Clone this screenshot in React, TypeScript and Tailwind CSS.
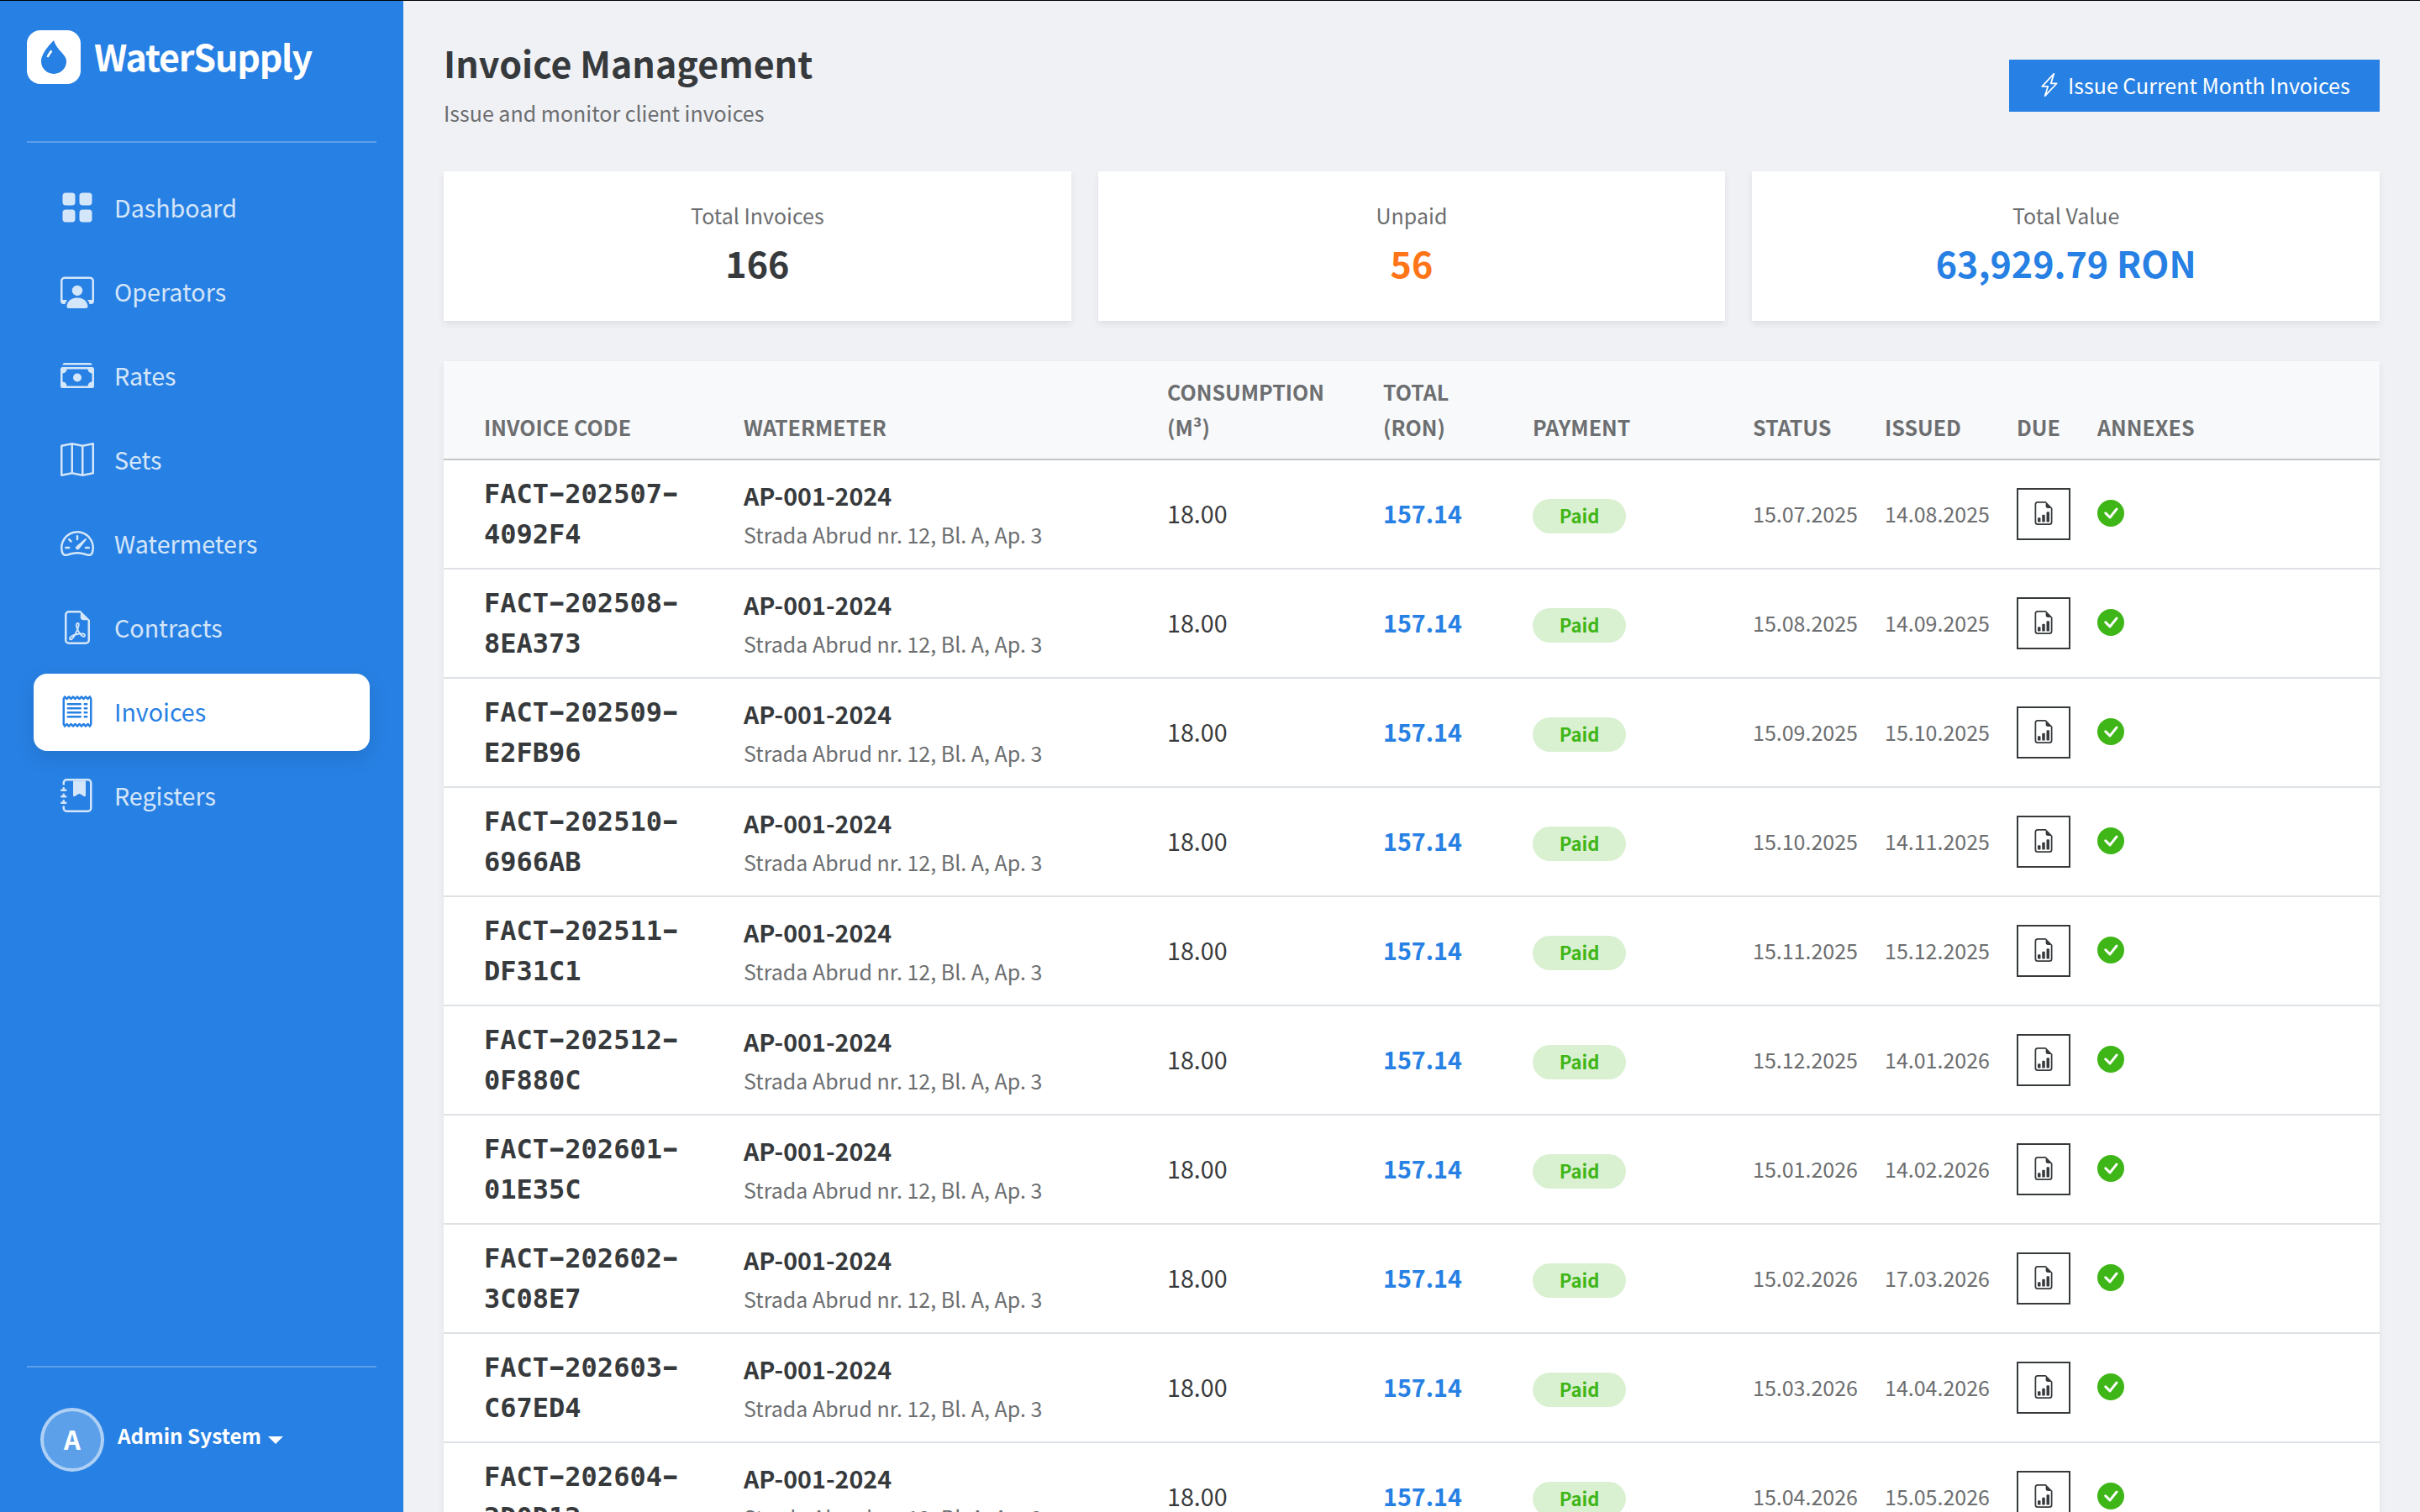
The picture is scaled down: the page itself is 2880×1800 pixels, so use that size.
import { clsx } from 'clsx'
import type { IconType } from 'react-icons'
import {
  BsCashStack,
  BsCheckCircleFill,
  BsDropletFill,
  BsFileEarmarkBarGraph,
  BsFileEarmarkPdf,
  BsGridFill,
  BsJournalBookmarkFill,
  BsLightningCharge,
  BsMap,
  BsPersonWorkspace,
  BsReceipt,
  BsSpeedometer2,
} from 'react-icons/bs'

interface Invoice {
  period: string
  suffix: string
  issued: string
  due: string
}

const NAV: { label: string; icon: IconType; active?: boolean }[] = [
  { label: 'Dashboard', icon: BsGridFill },
  { label: 'Operators', icon: BsPersonWorkspace },
  { label: 'Rates', icon: BsCashStack },
  { label: 'Sets', icon: BsMap },
  { label: 'Watermeters', icon: BsSpeedometer2 },
  { label: 'Contracts', icon: BsFileEarmarkPdf },
  { label: 'Invoices', icon: BsReceipt, active: true },
  { label: 'Registers', icon: BsJournalBookmarkFill },
]

const STATS = [
  { label: 'Total Invoices', value: '166', color: 'text-[#373a3c]' },
  { label: 'Unpaid', value: '56', color: 'text-[#ff7518]' },
  { label: 'Total Value', value: '63,929.79 RON', color: 'text-[#2780e3]' },
]

const INVOICES: Invoice[] = [
  { period: '202507', suffix: '4092F4', issued: '15.07.2025', due: '14.08.2025' },
  { period: '202508', suffix: '8EA373', issued: '15.08.2025', due: '14.09.2025' },
  { period: '202509', suffix: 'E2FB96', issued: '15.09.2025', due: '15.10.2025' },
  { period: '202510', suffix: '6966AB', issued: '15.10.2025', due: '14.11.2025' },
  { period: '202511', suffix: 'DF31C1', issued: '15.11.2025', due: '15.12.2025' },
  { period: '202512', suffix: '0F880C', issued: '15.12.2025', due: '14.01.2026' },
  { period: '202601', suffix: '01E35C', issued: '15.01.2026', due: '14.02.2026' },
  { period: '202602', suffix: '3C08E7', issued: '15.02.2026', due: '17.03.2026' },
  { period: '202603', suffix: 'C67ED4', issued: '15.03.2026', due: '14.04.2026' },
  { period: '202604', suffix: '2D0D12', issued: '15.04.2026', due: '15.05.2026' },
]

function Sidebar() {
  return (
    <aside className="flex w-[480px] shrink-0 flex-col bg-[#2780e3] px-8 text-white">
      <div className="flex h-[169px] items-start gap-4 border-b-2 border-white/25 pt-[35px]">
        <div className="flex size-16 items-center justify-center rounded-2xl bg-white">
          <BsDropletFill className="size-10 text-[#2780e3]" />
        </div>
        <span className="text-[43px] font-bold leading-[60px] tracking-[-1.2px]">WaterSupply</span>
      </div>

      <nav className="mt-8 flex flex-1 flex-col gap-2 px-2">
        {NAV.map(({ label, icon: Icon, active }) => (
          <a
            key={label}
            className={clsx(
              'flex h-[92px] items-center gap-6 rounded-2xl px-8',
              active
                ? 'bg-white text-[#2780e3] shadow-[0_8px_24px_rgba(0,0,0,0.1)]'
                : 'text-white/80',
            )}
          >
            <Icon className="mb-0.5 size-10" />
            <span className="pb-0.5 text-[28.65px] leading-[44px]">{label}</span>
          </a>
        ))}
      </nav>

      <div className="flex h-[174px] items-center border-t-2 border-white/25 px-4">
        <div className="flex size-[76px] items-center justify-center rounded-full border-4 border-white/50 bg-white/25">
          <span className="pb-0.5 text-[31px] font-bold leading-[40px]">A</span>
        </div>
        <span className="ml-4 pb-2.5 text-[24.3px] font-bold leading-[36px]">Admin System</span>
        <svg className="ml-2 h-[9px] w-[18px]" viewBox="0 0 18 9" fill="currentColor">
          <path d="M0 0h18L9 9z" />
        </svg>
      </div>
    </aside>
  )
}

// the mono hyphen is short, stretch it to nearly fill its cell
function Dash() {
  return <span className="inline-block origin-center -translate-y-px scale-x-[1.55]">-</span>
}

function InvoiceRow({ invoice }: { invoice: Invoice }) {
  return (
    <tr className="h-[130px] *:border-b-2 *:border-[#dee2e6]">
      <td className="pl-12 font-['DejaVu_Sans_Mono',monospace] text-[32px] font-bold leading-[48px]">
        FACT<Dash />{invoice.period}<Dash /><br />
        {invoice.suffix}
      </td>
      <td className="px-4 pb-0.5">
        <div className="text-[28.65px] font-bold leading-[50px]">AP-001-2024</div>
        <div className="text-[25px] leading-[42px] text-[#6c6e70]">Strada Abrud nr. 12, Bl. A, Ap. 3</div>
      </td>
      <td className="px-4 pb-0.5 text-[28.65px] leading-[48px]">18.00</td>
      <td className="px-4 pb-0.5 text-[28.65px] font-bold leading-[48px] text-[#2780e3]">157.14</td>
      <td className="px-4 pt-[5px]">
        <div className="flex h-[41px] w-[111px] items-center justify-center rounded-full bg-[#d9f0d1] pb-0.5 text-[22px] font-bold text-[#3fb618]">
          Paid
        </div>
      </td>
      <td className="px-4 pb-0.5 text-[25px] leading-[42px] text-[#6c6e70]">{invoice.issued}</td>
      <td className="px-4 pb-0.5 text-[25px] leading-[42px] text-[#6c6e70]">{invoice.due}</td>
      <td className="px-4">
        <button className="flex h-[62px] w-16 items-center justify-center border-2 border-[#373a3c] pb-0.5">
          <BsFileEarmarkBarGraph className="size-7" />
        </button>
      </td>
      <td className="px-4 pb-0.5">
        <BsCheckCircleFill className="size-8 text-[#3fb618]" />
      </td>
    </tr>
  )
}

function InvoiceTable() {
  return (
    <section className="mt-12 bg-white shadow-[0_4px_8px_rgba(0,0,0,0.075)]">
      <table className="w-full table-fixed border-separate border-spacing-0 text-left">
        <colgroup>
          <col className="w-[341px]" />
          <col className="w-[504px]" />
          <col className="w-[257px]" />
          <col className="w-[178px]" />
          <col className="w-[262px]" />
          <col className="w-[157px]" />
          <col className="w-[157px]" />
          <col className="w-[96px]" />
          <col />
        </colgroup>
        <thead>
          <tr className="h-[118px] bg-[#f8f9fb] align-bottom text-[25px] font-bold uppercase leading-[42px] text-[#6c6e70] *:border-b-2 *:border-[#c3c6c8] *:pb-[17px]">
            <th className="pl-12">Invoice Code</th>
            <th className="px-4">Watermeter</th>
            <th className="px-4">Consumption<br />(m³)</th>
            <th className="px-4">Total<br />(RON)</th>
            <th className="px-4">Payment</th>
            <th className="px-4">Status</th>
            <th className="px-4">Issued</th>
            <th className="px-4">Due</th>
            <th className="px-4">Annexes</th>
          </tr>
        </thead>
        <tbody>
          {INVOICES.map(inv => <InvoiceRow key={inv.period} invoice={inv} />)}
        </tbody>
      </table>
    </section>
  )
}

export default function App() {
  return (
    <div className="flex h-[1800px] w-[2880px] overflow-hidden border-t border-black bg-[#f0f1f5] font-['Noto_Sans_CJK_JP',sans-serif] text-[#373a3c]">
      <Sidebar />
      <main className="min-w-0 flex-1 px-12 pt-11">
        <header className="flex h-[115px] items-start justify-between">
          <div>
            <h1 className="text-[43px] font-bold leading-[58px]">Invoice Management</h1>
            <p className="mt-2.5 text-[25px] leading-[42px] text-[#6c6e70]">Issue and monitor client invoices</p>
          </div>
          <button className="mt-[26px] flex h-[62px] w-[441px] items-center gap-2 bg-[#2780e3] pl-[34px] text-[25px] text-white">
            <BsLightningCharge className="mb-0.5 size-7" />
            <span>Issue Current Month Invoices</span>
          </button>
        </header>

        <div className="mt-11 grid grid-cols-3 gap-8">
          {STATS.map(s => (
            <div key={s.label} className="flex h-[178px] flex-col items-center bg-white pt-[31px] shadow-[0_4px_8px_rgba(0,0,0,0.075)]">
              <span className="text-[25px] leading-[42px] text-[#6c6e70]">{s.label}</span>
              <span className={clsx('mt-1.5 text-[43px] font-bold leading-[58px]', s.color)}>{s.value}</span>
            </div>
          ))}
        </div>

        <InvoiceTable />
      </main>
    </div>
  )
}
